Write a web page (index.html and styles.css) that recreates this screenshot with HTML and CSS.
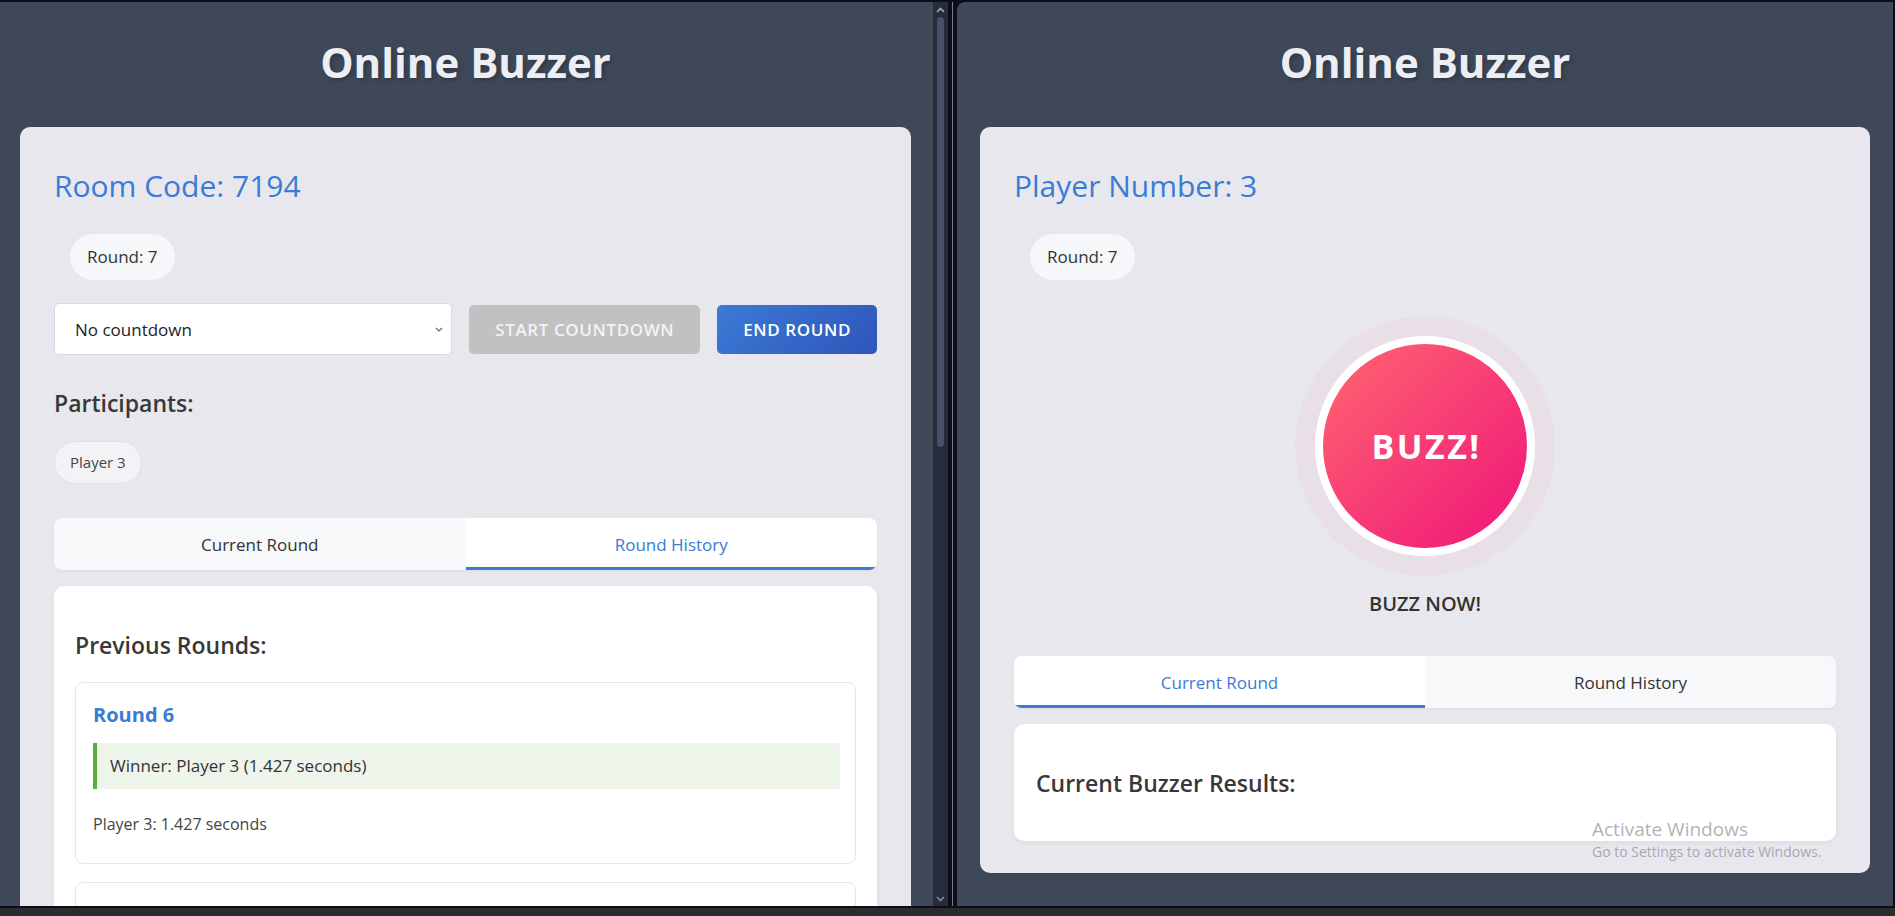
FILE: index.html
```html
<!DOCTYPE html>
<html lang="en">
<head>
<meta charset="utf-8">
<title>Online Buzzer</title>
<link rel="stylesheet" href="styles.css">
</head>
<body>
<div class="topline"></div>
<div class="windows">
  <section class="win win-left">
    <div class="page">
      <header class="app-header"><h1 class="app-title">Online Buzzer</h1></header>
      <main class="card">
        <h2 class="card-title">Room Code: 7194</h2>
        <div class="round-pill">Round: 7</div>
        <div class="controls">
          <select class="countdown-select"><option>No countdown</option></select>
          <button class="btn btn-disabled">Start Countdown</button>
          <button class="btn btn-primary">End Round</button>
        </div>
        <h3 class="section-title participants-title">Participants:</h3>
        <div class="participants"><span class="participant">Player 3</span></div>
        <div class="tabs">
          <button class="tab">Current Round</button>
          <button class="tab tab-active">Round History</button>
        </div>
        <div class="tab-panel history-panel">
          <h3 class="section-title">Previous Rounds:</h3>
          <div class="round-list">
            <div class="round-item">
              <h4 class="round-name">Round 6</h4>
              <div class="winner">Winner: Player 3 (1.427 seconds)</div>
              <p class="result-line">Player 3: 1.427 seconds</p>
            </div>
            <div class="round-item round-item-next"></div>
          </div>
        </div>
      </main>
    </div>
    <div class="scrollbar">
      <svg class="sb-arrow" width="9" height="6" viewBox="0 0 9 6"><path d="M1 5 L4.5 1.5 L8 5" fill="none" stroke="#a4a6b4" stroke-width="1.6"/></svg>
      <div class="sb-thumb"></div>
      <div class="sb-spacer"></div>
      <svg class="sb-arrow" width="9" height="6" viewBox="0 0 9 6"><path d="M1 1 L4.5 4.5 L8 1" fill="none" stroke="#8a8c9a" stroke-width="1.6"/></svg>
    </div>
  </section>
  <div class="divider"><span class="divider-line"></span></div>
  <section class="win win-right">
    <div class="page">
      <header class="app-header"><h1 class="app-title">Online Buzzer</h1></header>
      <main class="card">
        <h2 class="card-title">Player Number: 3</h2>
        <div class="round-pill">Round: 7</div>
        <div class="buzzer-wrap">
          <button class="buzzer">BUZZ!</button>
        </div>
        <p class="buzz-status">BUZZ NOW!</p>
        <div class="tabs tabs-right">
          <button class="tab tab-active">Current Round</button>
          <button class="tab">Round History</button>
        </div>
        <div class="tab-panel results-panel">
          <h3 class="section-title">Current Buzzer Results:</h3>
        </div>
      </main>
    </div>
    <div class="watermark">
      <div class="wm-title">Activate Windows</div>
      <div class="wm-sub">Go to Settings to activate Windows.</div>
    </div>
  </section>
</div>
<div class="taskbar"></div>
</body>
</html>
```

FILE: styles.css
```css
html, body {
  margin: 0;
  padding: 0;
}

body {
  width: 1895px;
  height: 916px;
  overflow: hidden;
  background: #0b0e1a;
  font-family: "Open Sans", "Noto Sans", "DejaVu Sans", sans-serif;
  color: #333;
  display: flex;
  flex-direction: column;
}

.topline {
  flex: none;
  height: 2px;
  background: #0b0e1a;
}

.windows {
  flex: none;
  height: 904px;
  display: flex;
}

.win {
  position: relative;
  overflow: hidden;
  background: #3e4859;
  display: flex;
}

.win-left {
  width: 948px;
}

.win-right {
  width: 936px;
  border-top-left-radius: 8px;
}

.page {
  box-sizing: border-box;
  height: 904px;
  overflow: hidden;
}

.win-left .page {
  width: 933px;
  padding: 0 22px 0 20px;
}

.win-right .page {
  width: 936px;
  padding: 0 23px;
}

.app-header {
  box-sizing: border-box;
  height: 125px;
  padding-bottom: 7px;
  display: flex;
  align-items: center;
  justify-content: center;
}

.app-title {
  margin: 0;
  font-size: 42px;
  font-weight: 700;
  letter-spacing: 0;
  color: #eceef3;
  text-shadow: 2px 2px 4px rgba(0, 0, 0, 0.25);
}

.card {
  background: #e8e7ee;
  border-radius: 10px;
  padding: 41px 34px 32px;
  display: flex;
  flex-direction: column;
}

.card-title {
  margin: 0;
  font-size: 30px;
  line-height: 36px;
  font-weight: 500;
  color: #3a7bd5;
}

.round-pill {
  align-self: flex-start;
  margin: 30px 0 0 16px;
  padding: 11px 17px;
  line-height: 24px;
  font-size: 17px;
  font-weight: 500;
  color: #333;
  background: #f6f7f9;
  border-radius: 23px;
}

.controls {
  margin-top: 23px;
  display: flex;
  align-items: center;
  gap: 17px;
}

.countdown-select {
  flex: 1;
  height: 52px;
  box-sizing: border-box;
  appearance: none;
  -webkit-appearance: none;
  border: 1px solid #d9d9df;
  border-radius: 5px;
  background: #fff url("data:image/svg+xml;utf8,<svg xmlns='http://www.w3.org/2000/svg' width='8' height='5' viewBox='0 0 8 5'><path d='M1 1 L4 4 L7 1' fill='none' stroke='%23666' stroke-width='1.2'/></svg>") no-repeat right 8px center;
  padding: 0 20px;
  font-family: inherit;
  font-size: 17px;
  color: #222;
}

.btn {
  height: 49px;
  border: none;
  border-radius: 5px;
  padding: 0 26px;
  font-family: inherit;
  font-size: 17px;
  font-weight: 600;
  text-transform: uppercase;
  letter-spacing: 0.6px;
}

.btn-disabled {
  background: #c1c1c1;
  color: #f3f3f3;
}

.btn-primary {
  background: linear-gradient(135deg, #3b7bd6, #2f55b9);
  color: #fff;
}

.section-title {
  margin: 0;
  font-size: 23px;
  line-height: 32px;
  font-weight: 600;
  color: #383838;
}

.participants-title {
  margin-top: 32px;
}

.participants {
  margin-top: 22px;
  display: flex;
  gap: 10px;
}

.participant {
  padding: 10px 15px;
  line-height: 21px;
  font-size: 15px;
  color: #444;
  background: #f3f3f6;
  border: 1px solid #e0e0e6;
  border-radius: 22px;
}

.tabs {
  margin-top: 34px;
  display: grid;
  grid-template-columns: 1fr 1fr;
  border-radius: 8px;
  overflow: hidden;
  box-shadow: 0 1px 3px rgba(0, 0, 0, 0.05);
}

.tabs-right {
  margin-top: 38px;
}

.tab {
  height: 52px;
  box-sizing: border-box;
  border: none;
  border-bottom: 3px solid transparent;
  background: #f7f8fa;
  font-family: inherit;
  font-size: 17px;
  font-weight: 500;
  color: #333;
  padding: 3px 0 0;
}

.tab-active {
  background: #fff;
  color: #3a7bd5;
  border-bottom-color: #3a7bd5;
}

.tab-panel {
  margin-top: 16px;
  background: #fff;
  border-radius: 10px;
  box-shadow: 0 2px 6px rgba(0, 0, 0, 0.05);
}

.history-panel {
  padding: 43px 21px 0;
}

.results-panel {
  padding: 43px 22px 42px;
}

.round-list {
  margin-top: 21px;
  display: flex;
  flex-direction: column;
  gap: 18px;
}

.round-item {
  border: 1px solid #e6e6ea;
  border-radius: 8px;
  padding: 18px 15px 27px 17px;
}

.round-item-next {
  height: 120px;
}

.round-name {
  margin: 0;
  font-size: 20px;
  line-height: 28px;
  font-weight: 700;
  color: #3a7bd5;
}

.winner {
  margin-top: 14px;
  background: #eef5ea;
  border-left: 4px solid #5cac3c;
  padding: 11px 13px;
  line-height: 24px;
  font-size: 17px;
  font-weight: 500;
  color: #333;
}

.result-line {
  margin: 23px 0 0;
  font-size: 16px;
  line-height: 24px;
  color: #444;
}

.buzzer-wrap {
  margin-top: 56px;
  display: flex;
  justify-content: center;
}

.buzzer {
  width: 220px;
  height: 220px;
  box-sizing: border-box;
  border: 8px solid #fff;
  border-radius: 50%;
  background: linear-gradient(135deg, #ff6670 0%, #f0147a 100%);
  box-shadow: 0 0 0 20px #e9dfe6;
  font-family: inherit;
  font-size: 34px;
  font-weight: 700;
  letter-spacing: 2.5px;
  color: #fff;
  padding: 0 0 0 3px;
}

.buzz-status {
  margin: 34px 0 0;
  text-align: center;
  font-size: 20px;
  line-height: 28px;
  font-weight: 600;
  color: #333;
}

.scrollbar {
  width: 15px;
  height: 904px;
  background: #272b3a;
  display: flex;
  flex-direction: column;
  align-items: center;
  padding: 5px 0 4px;
  box-sizing: border-box;
}

.sb-thumb {
  margin-top: 4px;
  width: 7px;
  height: 430px;
  border-radius: 4px;
  background: #4c4f6a;
}

.sb-spacer {
  flex: 1;
}

.divider {
  width: 9px;
  background: #0b0e1a;
  display: flex;
  padding-left: 4px;
  box-sizing: border-box;
}

.divider-line {
  width: 1px;
  background: #777b86;
}

.watermark {
  position: absolute;
  left: 635px;
  top: 814px;
  color: rgba(110, 110, 122, 0.55);
}

.wm-title {
  font-size: 19px;
  line-height: 26px;
}

.wm-sub {
  font-size: 14px;
  line-height: 20px;
}

.taskbar {
  flex: none;
  height: 8px;
  border-top: 2px solid #0b0e1a;
  background: #2c2c2e;
}
```
